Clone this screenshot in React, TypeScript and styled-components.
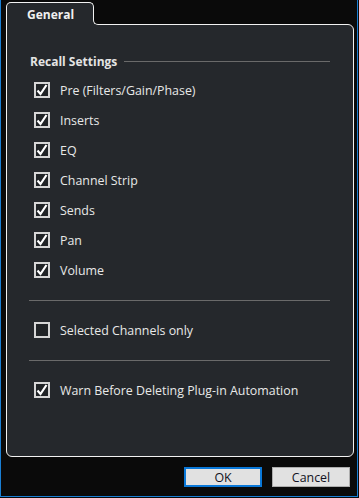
import styled, { createGlobalStyle } from 'styled-components';

const GlobalStyle = createGlobalStyle`
  html, body {
    margin: 0;
    padding: 0;
    background: #0a0a0a;
  }
  body {
    font-family: 'Open Sans', 'Noto Sans', sans-serif;
    font-size: 12.4px;
    color: #e8e8e8;
  }
`;

const StWindow = styled.div`
  box-sizing: border-box;
  width: 358px;
  height: 497px;
  padding: 2px 3px 0 5px;
  background: #0a0a0a;
  border: 1px solid #1a7fd4;
  border-top: none;
  display: flex;
  flex-direction: column;
`;

const StTab = styled.div`
  position: relative;
  z-index: 1;
  box-sizing: border-box;
  width: 88px;
  height: 23px;
  margin-bottom: -1px;
  padding-left: 20px;
  display: flex;
  align-items: center;
  background: #25282c;
  border: 1px solid #f2f2f2;
  border-bottom: none;
  border-radius: 5px 5px 0 0;
  font-size: 12px;
  font-weight: 700;
  color: #f0f0f0;

  &::before,
  &::after {
    content: '';
    position: absolute;
    right: -6px;
    bottom: 0;
    box-sizing: border-box;
    width: 6px;
    height: 6px;
  }

  &::before {
    background: #25282c;
  }

  &::after {
    background: #0a0a0a;
    border-left: 1px solid #f2f2f2;
    border-bottom: 1px solid #f2f2f2;
    border-bottom-left-radius: 5px;
  }
`;

const StPanel = styled.div`
  box-sizing: border-box;
  height: 433px;
  padding: 28px 23px 0 22px;
  background: #25282c;
  border: 1px solid #f2f2f2;
  border-radius: 0 6px 6px 6px;
  display: flex;
  flex-direction: column;
`;

const StHeading = styled.div`
  display: flex;
  align-items: center;
  gap: 7px;
  height: 16px;
  margin-bottom: 6px;
  padding-left: 1px;
  font-size: 12px;
  font-weight: 700;
  color: #e4e4e4;
  white-space: nowrap;

  &::after {
    content: '';
    flex: 1;
    height: 1px;
    background: #6a6a6a;
  }
`;

const StRow = styled.label`
  display: flex;
  align-items: center;
  gap: 10px;
  height: 30px;
  padding-left: 5px;
  white-space: nowrap;
`;

const StBox = styled.span`
  box-sizing: border-box;
  width: 16px;
  height: 16px;
  flex-shrink: 0;
  display: flex;
  align-items: center;
  justify-content: center;
  background: #202326;
  border: 2px solid #d6d6d6;
`;

const StSeparator = styled.div`
  display: flex;
  align-items: center;
  height: 30px;

  &::before {
    content: '';
    flex: 1;
    height: 1px;
    background: #6a6a6a;
  }
`;

const StButtons = styled.div`
  display: flex;
  justify-content: flex-end;
  gap: 10px;
  margin-top: 10px;
  padding-right: 4px;
`;

const StButton = styled.button<{ primary?: boolean }>`
  box-sizing: border-box;
  width: 78px;
  height: 20px;
  padding: 0;
  font-family: 'Open Sans', 'Noto Sans', sans-serif;
  font-size: 12.4px;
  color: #111122;
  background: #e1e1e1;
  border: ${(props) => (props.primary ? '2px solid #0a78d8' : '1px solid #adadad')};
`;

function Checkbox({ label, checked }: { label: string; checked: boolean }) {
  return (
    <StRow>
      <StBox>
        {checked && (
          <svg width="12" height="12" viewBox="0 0 12 12">
            <polyline
              points="1.5,6.5 4.5,10 10.5,1"
              fill="none"
              stroke="#ffffff"
              strokeWidth="2.2"
            />
          </svg>
        )}
      </StBox>
      {label}
    </StRow>
  );
}

const recall = [
  'Pre (Filters/Gain/Phase)',
  'Inserts',
  'EQ',
  'Channel Strip',
  'Sends',
  'Pan',
  'Volume',
];

export default function App() {
  return (
    <>
      <GlobalStyle />
      <StWindow>
        <StTab>General</StTab>
        <StPanel>
          <StHeading>Recall Settings</StHeading>
          {recall.map((item) => (
            <Checkbox key={item} label={item} checked />
          ))}
          <StSeparator />
          <Checkbox label="Selected Channels only" checked={false} />
          <StSeparator />
          <Checkbox label="Warn Before Deleting Plug-in Automation" checked />
        </StPanel>
        <StButtons>
          <StButton primary>OK</StButton>
          <StButton>Cancel</StButton>
        </StButtons>
      </StWindow>
    </>
  );
}
